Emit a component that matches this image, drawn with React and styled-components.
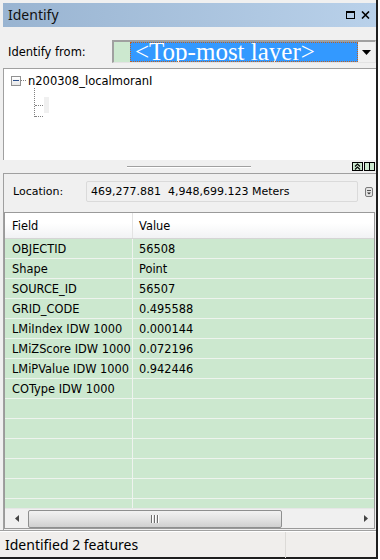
import React from "react";
import styled, { createGlobalStyle } from "styled-components";

const GlobalStyle = createGlobalStyle`
  html, body { margin: 0; padding: 0; background: #ffffff; }
  body { font-family: "DejaVu Sans", Verdana, sans-serif; }
  * { box-sizing: border-box; }
`;

const Window = styled.div`
  width: 378px;
  height: 559px;
  background: #f0f0f0;
  border-right: 2px solid #1e1e1e;
  border-bottom: 2px solid #1e1e1e;
  padding: 3px 0 0 3px;
  display: flex;
  flex-direction: column;
`;

const TitleBar = styled.div`
  height: 24px;
  flex: none;
  background: linear-gradient(to right, #99b4d1, #b9d1ea);
  display: flex;
  align-items: center;
  padding: 0 6px 0 5px;
  font-family: "Noto Sans", "Open Sans", sans-serif;
  font-size: 14px;
  color: #111;
`;

const TitleText = styled.span`
  flex: 1;
  margin-top: -1px;
`;

const TitleIcons = styled.div`
  display: flex;
  gap: 6px;
  align-items: center;
`;

const FromRow = styled.div`
  height: 41px;
  flex: none;
  display: flex;
  align-items: center;
  padding: 13px 0 5px 5px;
`;

const Label = styled.span`
  font-size: ${(p) => p.$fs || 11}px;
  color: #000;
  width: ${(p) => p.$w}px;
  flex: none;
`;

const Combo = styled.div`
  flex: 1;
  height: 23px;
  display: flex;
  border-top: 2px solid #a0a0a0;
  border-left: 2px solid #a0a0a0;
  border-bottom: 1px solid #e3e3e3;
  border-right: 1px solid #e3e3e3;
  background: #fff;
`;

const Swatch = styled.div`
  width: 16px;
  background: #cce8cf;
`;

const Selected = styled.div`
  flex: 1;
  background: #3399ff;
  outline: 1px dotted #c06020;
  outline-offset: -1px;
  color: #fff;
  font-family: "Liberation Serif", "Times New Roman", serif;
  font-size: 25px;
  line-height: 19px;
  padding-left: 5px;
  overflow: hidden;
  white-space: nowrap;
`;

const DropBtn = styled.div`
  width: 17px;
  background: #f0f0f0;
  display: flex;
  align-items: center;
  justify-content: center;
`;

const TreePanel = styled.div`
  height: 92px;
  flex: none;
  background: #fff;
  border-top: 1px solid #a0a0a0;
  border-left: 1px solid #a0a0a0;
  font-size: 11.5px;
`;

const TreeRoot = styled.div`
  display: flex;
  align-items: center;
  padding: 4px 0 0 7px;
  height: 19px;
`;

const Expander = styled.div`
  width: 10px;
  height: 10px;
  border: 1px solid #919191;
  background: linear-gradient(#fff, #e6e6e6);
  display: flex;
  align-items: center;
  justify-content: center;
  flex: none;
`;

const Minus = styled.div`
  width: 6px;
  height: 1px;
  background: #2b4f8a;
`;

const DotH = styled.div`
  width: ${(p) => p.$w}px;
  border-top: 1px dotted #808080;
  flex: none;
`;

const TreeChildren = styled.div`
  margin-left: 30px;
  width: 20px;
  height: 29px;
  border-left: 1px dotted #808080;
  display: flex;
  flex-direction: column;
  justify-content: space-between;
  padding-top: 9px;
`;

const ChildRow = styled.div`
  display: flex;
  align-items: center;
`;

const ChildSel = styled.div`
  width: 5px;
  height: 16px;
  background: #f0f0f0;
  margin-left: 1px;
`;

const Splitter = styled.div`
  height: 13px;
  flex: none;
  display: flex;
  align-items: flex-start;
  padding-top: 2px;
  position: relative;
`;

const SplitLine = styled.div`
  position: absolute;
  left: 124px;
  top: 6px;
  width: 124px;
  height: 2px;
  border-top: 1px solid #a0a0a0;
  border-bottom: 1px solid #ffffff;
`;

const MiniBtns = styled.div`
  margin-left: auto;
  margin-right: 1px;
  display: flex;
  gap: 1px;
`;

const MiniBtn = styled.div`
  width: 11px;
  height: 9px;
  border: 1px solid #000;
  background: #cce8cf;
  display: flex;
  align-items: center;
  justify-content: center;
`;

const Lower = styled.div`
  flex: 1;
  display: flex;
  flex-direction: column;
  border-top: 1px solid #a0a0a0;
  border-left: 1px solid #a0a0a0;
  min-height: 0;
`;

const LocRow = styled.div`
  height: 38px;
  flex: none;
  display: flex;
  align-items: center;
  padding: 0 0 4px 9px;
`;

const LocBox = styled.div`
  width: 272px;
  height: 21px;
  border: 1px solid #dadada;
  border-radius: 2px;
  background: #f0f0f0;
  display: flex;
  align-items: center;
  padding-left: 4px;
  font-size: 11px;
  white-space: pre;
`;

const LocIcon = styled.div`
  margin-left: 7px;
  align-self: flex-start;
  margin-top: 8px;
`;

const Grid = styled.div`
  flex: none;
  height: 317px;
  margin-right: 1px;
  border: 1px solid #9a9a9a;
  display: flex;
  flex-direction: column;
  background: #cce8cf;
  font-size: 11.4px;
`;

const HeaderRow = styled.div`
  height: 26px;
  flex: none;
  display: grid;
  grid-template-columns: 128px 1fr;
  background: linear-gradient(#ffffff 0%, #ffffff 40%, #f1f2f4 100%);
  border-bottom: 1px solid #d5d5d5;
`;

const HeadCell = styled.div`
  display: flex;
  align-items: center;
  padding-left: ${(p) => p.$pl}px;
  border-right: ${(p) => (p.$div ? "1px solid #e3e3e3" : "none")};
  color: #000;
`;

const Body = styled.div`
  flex: 1;
  overflow: hidden;
  min-height: 0;
`;

const Row = styled.div`
  height: 20px;
  display: grid;
  grid-template-columns: 128px 1fr;
  border-bottom: 1px solid #eef3ee;
`;

const Cell = styled.div`
  display: flex;
  align-items: center;
  padding-left: ${(p) => p.$pl}px;
  border-right: ${(p) => (p.$div ? "1px solid #eef3ee" : "none")};
  color: #000;
  white-space: nowrap;
  overflow: hidden;
`;

const HScroll = styled.div`
  height: 20px;
  flex: none;
  display: flex;
  background: #f0f0f0;
  border-top: 1px solid #e6e6e6;
`;

const ScrollBtn = styled.div`
  width: ${(p) => p.$w}px;
  display: flex;
  align-items: center;
  justify-content: center;
  flex: none;
`;

const Track = styled.div`
  flex: 1;
  display: flex;
  align-items: center;
`;

const Thumb = styled.div`
  width: 254px;
  height: 18px;
  border: 1px solid #8e8f8f;
  border-radius: 2px;
  background: linear-gradient(#f2f2f2 0%, #e3e3e3 50%, #d0d0d0 100%);
  display: flex;
  align-items: center;
  justify-content: center;
`;

const Grip = styled.div`
  display: flex;
  gap: 1px;
`;

const GripLine = styled.div`
  width: 1px;
  height: 8px;
  background: #6e6e6e;
  box-shadow: 1px 0 0 #fff;
  margin-right: 1px;
`;

const Status = styled.div`
  flex: 1;
  display: flex;
  align-items: center;
  border-top: 1px solid #a0a0a0;
  box-shadow: inset 0 1px 0 #ffffff;
  margin-top: 1px;
  margin-left: -4px;
  background: #f0eeec;
  font-family: "Noto Sans", "Open Sans", sans-serif;
  font-size: 14px;
  color: #000;
`;

const StatusText = styled.div`
  width: 286px;
  padding-left: 5px;
  height: 100%;
  display: flex;
  align-items: center;
  border-right: 1px solid #dcdad7;
  margin-top: 1px;
`;

const fields = [
  ["OBJECTID", "56508"],
  ["Shape", "Point"],
  ["SOURCE_ID", "56507"],
  ["GRID_CODE", "0.495588"],
  ["LMiIndex IDW 1000", "0.000144"],
  ["LMiZScore IDW 1000", "0.072196"],
  ["LMiPValue IDW 1000", "0.942446"],
  ["COType IDW 1000", ""],
];

const rows = [...fields];
while (rows.length < 14) rows.push(["", ""]);

export default function App() {
  return (
    <>
      <GlobalStyle />
      <Window>
        <TitleBar>
          <TitleText>Identify</TitleText>
          <TitleIcons>
            <svg width="9" height="8" viewBox="0 0 9 8">
              <rect x="0.5" y="0.5" width="8" height="7" fill="none" stroke="#000" strokeWidth="1" />
              <rect x="0" y="0" width="9" height="2" fill="#000" />
            </svg>
            <svg width="9" height="8" viewBox="0 0 9 8">
              <path d="M1 0.5 L8 7.5 M8 0.5 L1 7.5" stroke="#000" strokeWidth="1.6" />
            </svg>
          </TitleIcons>
        </TitleBar>

        <FromRow>
          <Label $w={104} $fs={11.5}>Identify from:</Label>
          <Combo>
            <Swatch />
            <Selected>&lt;Top-most layer&gt;</Selected>
            <DropBtn>
              <svg width="9" height="5" viewBox="0 0 9 5">
                <path d="M0 0 L9 0 L4.5 5 Z" fill="#000" />
              </svg>
            </DropBtn>
          </Combo>
        </FromRow>

        <TreePanel>
          <TreeRoot>
            <Expander>
              <Minus />
            </Expander>
            <DotH $w={5} />
            <span style={{ marginLeft: 2 }}>n200308_localmoranI</span>
          </TreeRoot>
          <TreeChildren>
            <ChildRow>
              <DotH $w={8} />
              <ChildSel />
            </ChildRow>
            <ChildRow>
              <DotH $w={8} />
            </ChildRow>
          </TreeChildren>
        </TreePanel>

        <Splitter>
          <SplitLine />
          <MiniBtns>
            <MiniBtn>
              <svg width="7" height="7" viewBox="0 0 7 7">
                <path d="M1 3.5 L3.5 1 L6 3.5 M1 6.5 L3.5 4 L6 6.5" fill="none" stroke="#000" strokeWidth="1.2" />
              </svg>
            </MiniBtn>
            <MiniBtn>
              <svg width="3" height="7" viewBox="0 0 3 7">
                <rect x="1" y="0" width="1" height="7" fill="#000" />
              </svg>
            </MiniBtn>
          </MiniBtns>
        </Splitter>

        <Lower>
          <LocRow>
            <Label $w={73}>Location:</Label>
            <LocBox>469,277.881  4,948,699.123 Meters</LocBox>
            <LocIcon>
              <svg width="8" height="10" viewBox="0 0 8 10">
                <rect x="0.5" y="0.5" width="7" height="9" rx="1.5" fill="#e4e4e4" stroke="#7a7a7a" />
                <rect x="2" y="3" width="4" height="1" fill="#555" />
                <path d="M2 5.5 L6 5.5 L4 7.5 Z" fill="#333" />
              </svg>
            </LocIcon>
          </LocRow>

          <Grid>
            <HeaderRow>
              <HeadCell $pl={7} $div>Field</HeadCell>
              <HeadCell $pl={6}>Value</HeadCell>
            </HeaderRow>
            <Body>
              {rows.map(([f, v], i) => (
                <Row key={i}>
                  <Cell $pl={7} $div>{f}</Cell>
                  <Cell $pl={6}>{v}</Cell>
                </Row>
              ))}
            </Body>
            <HScroll>
              <ScrollBtn $w={23}>
                <svg width="4" height="7" viewBox="0 0 4 7">
                  <path d="M4 0 L0 3.5 L4 7 Z" fill="#444" />
                </svg>
              </ScrollBtn>
              <Track>
                <Thumb>
                  <Grip>
                    <GripLine />
                    <GripLine />
                    <GripLine />
                  </Grip>
                </Thumb>
              </Track>
              <ScrollBtn $w={17}>
                <svg width="4" height="7" viewBox="0 0 4 7">
                  <path d="M0 0 L4 3.5 L0 7 Z" fill="#444" />
                </svg>
              </ScrollBtn>
            </HScroll>
          </Grid>

          <Status>
            <StatusText>Identified 2 features</StatusText>
          </Status>
        </Lower>
      </Window>
    </>
  );
}
